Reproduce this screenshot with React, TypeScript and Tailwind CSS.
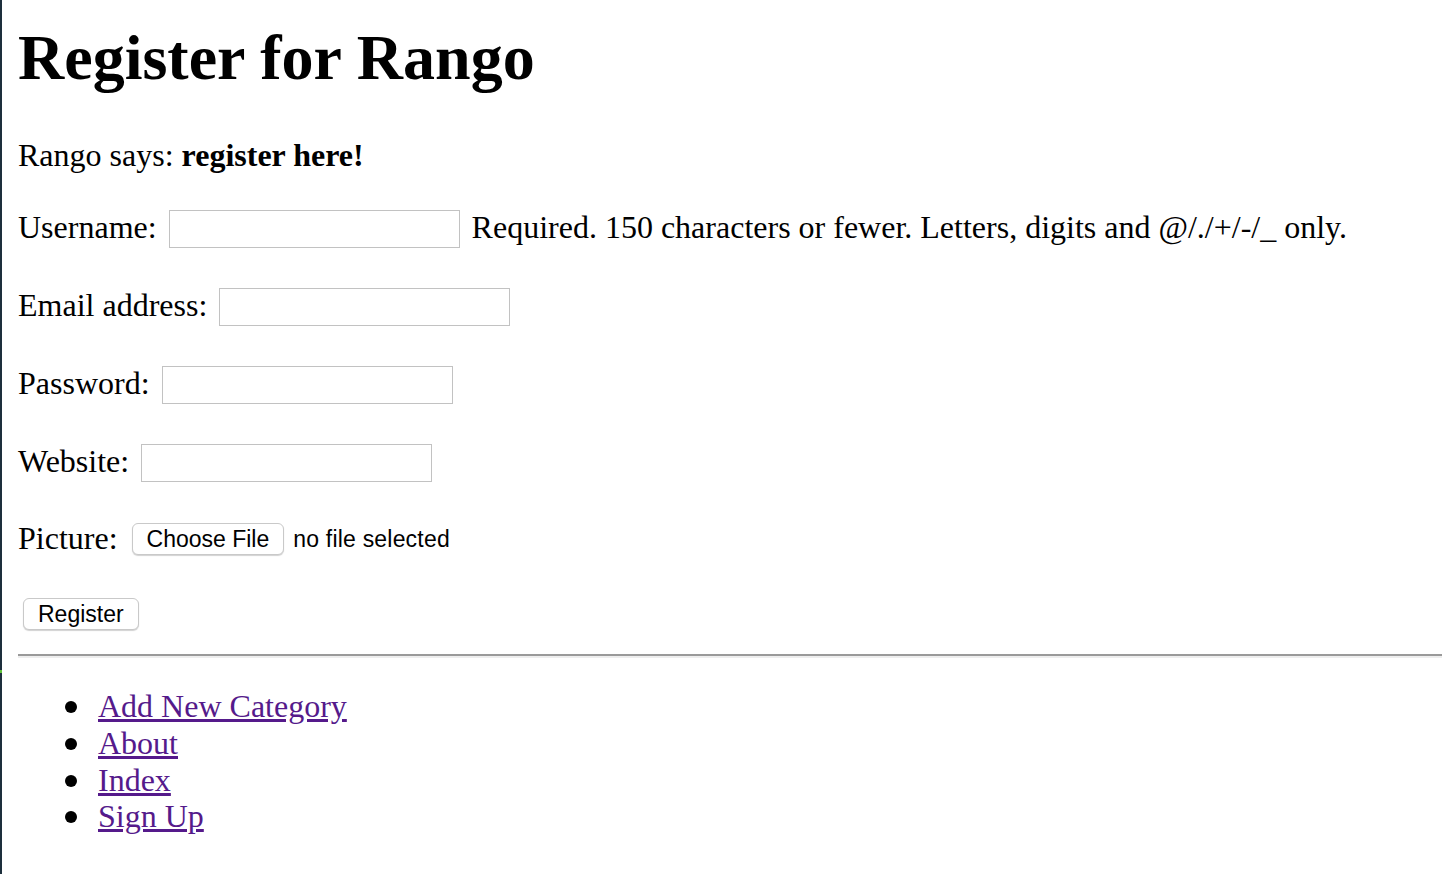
import React from "react";

function FieldRow({
  label,
  mt,
  children,
}: {
  label: string;
  mt: string;
  children?: React.ReactNode;
}) {
  return (
    <div className={`flex items-start h-[38px] ${mt}`}>
      <span className="leading-[34px] whitespace-nowrap">{label}</span>
      <input
        type="text"
        className="ml-[12px] w-[291px] h-[38px] border border-[#c2c2c2] bg-white outline-none"
      />
      {children}
    </div>
  );
}

function NavItem({ label }: { label: string }) {
  return (
    <li className="flex items-start h-[36.8px]">
      <span className="mt-[13px] w-[12px] h-[12px] rounded-full bg-black shrink-0" />
      <a href="#" className="ml-[21px] text-[#551a8b] underline whitespace-nowrap">
        {label}
      </a>
    </li>
  );
}

export default function App() {
  return (
    <div
      className="flex min-h-[874px] w-full bg-white text-black"
      style={{ fontFamily: '"Liberation Serif", "Times New Roman", serif' }}
    >
      <div className="w-[2px] shrink-0 bg-[#1d2f3c] flex flex-col">
        <div className="mt-[670px] h-[3px] w-[2px] bg-[#5fc13a]" />
      </div>
      <div className="flex-1 pl-[16px] flex flex-col">
        <h1 className="mt-[21px] text-[64px] leading-[74px] font-bold">
          Register for Rango
        </h1>
        <p className="mt-[42px] text-[32px] leading-[37px]">
          Rango says: <strong className="font-bold">register here!</strong>
        </p>
        <form className="text-[32px] flex flex-col">
          <FieldRow label="Username:" mt="mt-[36px]">
            <span className="ml-[12px] leading-[34px] whitespace-nowrap">
              Required. 150 characters or fewer. Letters, digits and @/./+/-/_ only.
            </span>
          </FieldRow>
          <FieldRow label="Email address:" mt="mt-[40px]" />
          <FieldRow label="Password:" mt="mt-[40px]" />
          <FieldRow label="Website:" mt="mt-[40px]" />
          <div className="flex items-start h-[32px] mt-[41px]">
            <span className="leading-[30px] whitespace-nowrap">Picture:</span>
            <div
              className="ml-[14px] flex items-center"
              style={{ fontFamily: '"Liberation Sans", Arial, sans-serif' }}
            >
              <button
                type="button"
                className="h-[32px] px-[14px] text-[23px] leading-none bg-white border border-[#c9c9c9] rounded-[6px] shadow-[0_1px_1px_rgba(0,0,0,0.18)] whitespace-nowrap"
              >
                Choose File
              </button>
              <span className="ml-[9px] h-[32px] flex items-center text-[23px] tracking-[0.2px] whitespace-nowrap">
                no file selected
              </span>
            </div>
          </div>
          <div className="mt-[43px] flex">
            <button
              type="button"
              className="ml-[5px] h-[32px] px-[14px] text-[23px] leading-none bg-white border border-[#c9c9c9] rounded-[6px] shadow-[0_1px_1px_rgba(0,0,0,0.18)]"
              style={{ fontFamily: '"Liberation Sans", Arial, sans-serif' }}
            >
              Register
            </button>
          </div>
        </form>
        <hr className="mt-[24px] border-0 border-t-2 border-t-[#9a9a9a] border-b-2 border-b-[#eeeeee] h-0" />
        <ul className="mt-[30px] pl-[47px] text-[32px] leading-[36.8px] flex flex-col">
          <NavItem label="Add New Category" />
          <NavItem label="About" />
          <NavItem label="Index" />
          <NavItem label="Sign Up" />
        </ul>
      </div>
    </div>
  );
}
